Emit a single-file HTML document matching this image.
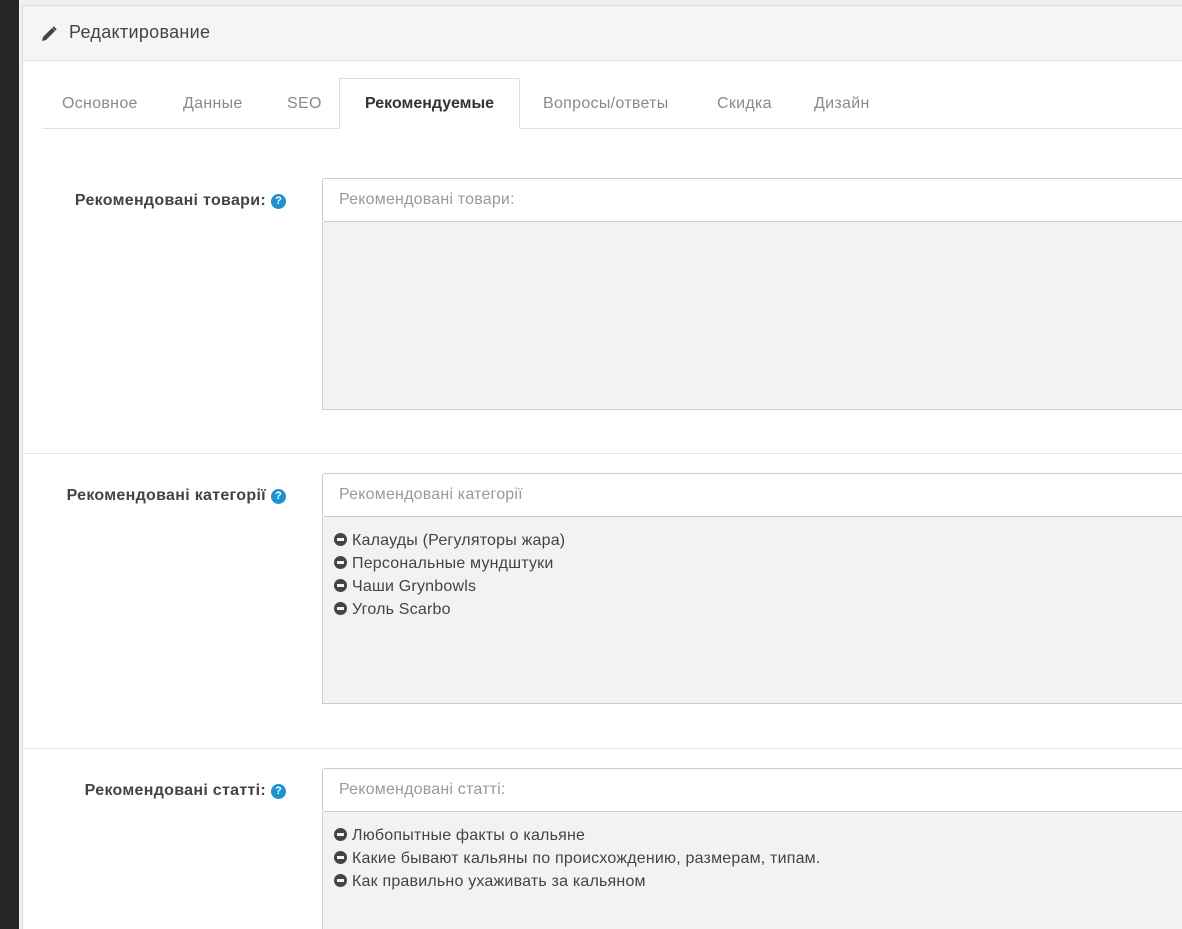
<!DOCTYPE html>
<html><head><meta charset="utf-8"><style>
*{box-sizing:border-box;margin:0;padding:0}
html{width:1182px;height:929px;overflow:hidden}
body{width:1182px;height:929px;overflow:hidden;background:#f0f0f0;font-family:"Liberation Sans",sans-serif;position:relative}
.dark{position:absolute;left:0;top:0;width:19px;height:929px;background:#262626}
.panel{position:absolute;left:22px;top:5px;width:1160px;height:924px;background:#fff;border:1px solid #ddd;border-right:none;border-bottom:none;overflow:hidden}
.head{height:55px;background:#f5f5f5;border-bottom:1px solid #ddd;font-size:18px;color:#444;padding:16px 0 0 46px;position:relative;letter-spacing:.3px}
.abs{position:absolute}
.tabs{position:absolute;left:20px;top:122px;width:1140px;border-bottom:1px solid #ddd;height:1px}
.tab{position:absolute;top:89px;font-size:16px;color:#8a8a8a;letter-spacing:.3px}
.act{position:absolute;left:316px;top:72px;width:181px;height:51px;border:1px solid #ddd;border-bottom:1px solid #fff;background:#fff;font-size:16px;font-weight:bold;color:#333;text-align:center;padding-top:16px}
.lbl{position:absolute;font-size:16px;font-weight:bold;color:#444;right:896px;white-space:nowrap;letter-spacing:.3px}
.q{display:inline-block;width:15px;height:15px;border-radius:50%;background:#1e91cf;color:#fff;font-size:11px;text-align:center;line-height:15px;vertical-align:1px;margin-left:5px;letter-spacing:0}
.inp{position:absolute;left:299px;width:870px;height:44px;border:1px solid #ccc;border-radius:3px;background:#fff;font-size:16px;color:#999;padding:12px 16px;letter-spacing:.2px}
.box{position:absolute;left:299px;width:870px;background:#f2f2f2;border:1px solid #ccc;border-top:none;font-size:16px;color:#444;padding:12px 11px;line-height:23px;letter-spacing:.2px}
.m{display:inline-block;width:13px;height:13px;border-radius:50%;background:#444;position:relative;vertical-align:-1px;margin-right:5px}
.m:after{content:"";position:absolute;left:3px;top:5px;width:7px;height:3px;background:#f2f2f2}
.sep{position:absolute;left:0;width:1160px;border-top:1px solid #e6e6e6}
</style></head><body>
<div class="dark"></div>
<div class="panel">
<div class="head"><svg class="abs" style="left:18px;top:20px" width="16" height="16" viewBox="0 0 16 16"><path d="M1 15 L2 11 L11 2 L14 5 L5 14 Z" fill="#444"/><path d="M12 1 L15 4" stroke="#444" stroke-width="2"/></svg>Редактирование</div>
<div class="tabs"></div>
<div class="tab" style="left:39px">Основное</div>
<div class="tab" style="left:160px">Данные</div>
<div class="tab" style="left:264px">SEO</div>
<div class="act">Рекомендуемые</div>
<div class="tab" style="left:520px">Вопросы/ответы</div>
<div class="tab" style="left:694px">Скидка</div>
<div class="tab" style="left:791px">Дизайн</div>

<div class="lbl" style="top:186px">Рекомендовані товари:<span class="q">?</span></div>
<div class="inp" style="top:172px">Рекомендовані товари:</div>
<div class="box" style="top:216px;height:188px"></div>
<div class="sep" style="top:447px"></div>

<div class="lbl" style="top:481px">Рекомендовані категорії<span class="q">?</span></div>
<div class="inp" style="top:467px">Рекомендовані категорії</div>
<div class="box" style="top:511px;height:187px"><span class="m"></span>Калауды (Регуляторы жара)<br><span class="m"></span>Персональные мундштуки<br><span class="m"></span>Чаши Grynbowls<br><span class="m"></span>Уголь Scarbo</div>
<div class="sep" style="top:742px"></div>

<div class="lbl" style="top:776px">Рекомендовані статті:<span class="q">?</span></div>
<div class="inp" style="top:762px">Рекомендовані статті:</div>
<div class="box" style="top:806px;height:118px"><span class="m"></span>Любопытные факты о кальяне<br><span class="m"></span>Какие бывают кальяны по происхождению, размерам, типам.<br><span class="m"></span>Как правильно ухаживать за кальяном</div>
</div>
</body></html>
